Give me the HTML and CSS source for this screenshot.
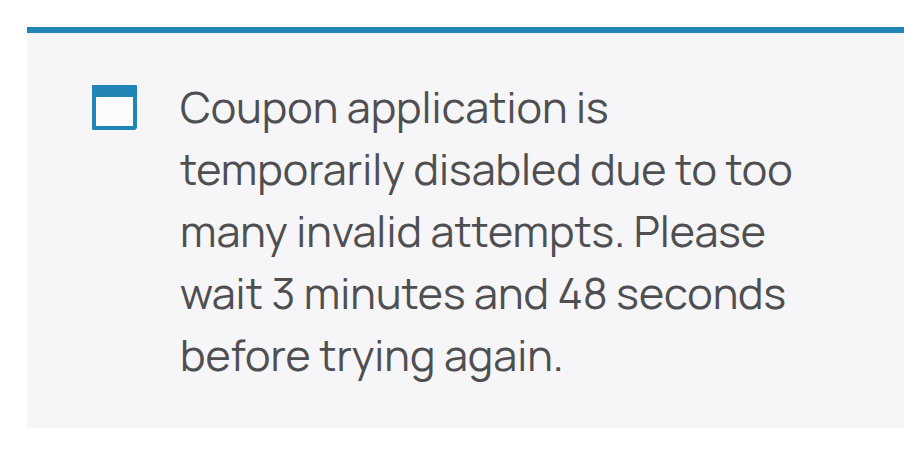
FILE: index.html
```html
<!DOCTYPE html>
<html lang="en">
<head>
    <meta charset="UTF-8">
    <meta name="viewport" content="width=device-width, initial-scale=1.0">
    <title>Cart notice</title>
    <link rel="stylesheet" href="styles.css">
</head>
<body>
    <main>
        <div class="notice" role="status">
            <svg class="notice-icon" viewBox="0 0 45 45" aria-hidden="true">
                <path fill="#2185b5" d="M1 0h43a1 1 0 0 1 1 1v42l-2 2H1a1 1 0 0 1-1-1V1a1 1 0 0 1 1-1z"/>
                <path fill="#fcfcfe" d="M4 12h37v29H4z"/>
            </svg>
            <p class="notice-text">Coupon application is temporarily disabled due to too many invalid attempts. Please wait 3 minutes and 48 seconds before trying again.</p>
        </div>
    </main>
</body>
</html>
```
FILE: styles.css
```css
:root {
    --primary: #2185b5;
    --bg: #fff;
    --card: #f6f6f9;
    --text: #4f4f52;
}
* { box-sizing: border-box; }
body {
    margin: 0;
    font-family: Manrope, Inter, "Liberation Sans", sans-serif;
    background: var(--bg);
    color: var(--text);
}
main {
    padding: 27px 18px 27px 27px;
}
.notice {
    display: flex;
    align-items: flex-start;
    gap: 43px;
    padding: 43px 96px 42px 65px;
    background: var(--card);
    border-top: 6px solid var(--primary);
}
.notice-icon {
    flex: none;
    width: 45px;
    height: 45px;
    margin-top: 9px;
}
.notice-text {
    flex: 1;
    margin: 0;
    font-size: 43px;
    font-weight: 400;
    font-variant-ligatures: none;
    line-height: 62px;
}
```
